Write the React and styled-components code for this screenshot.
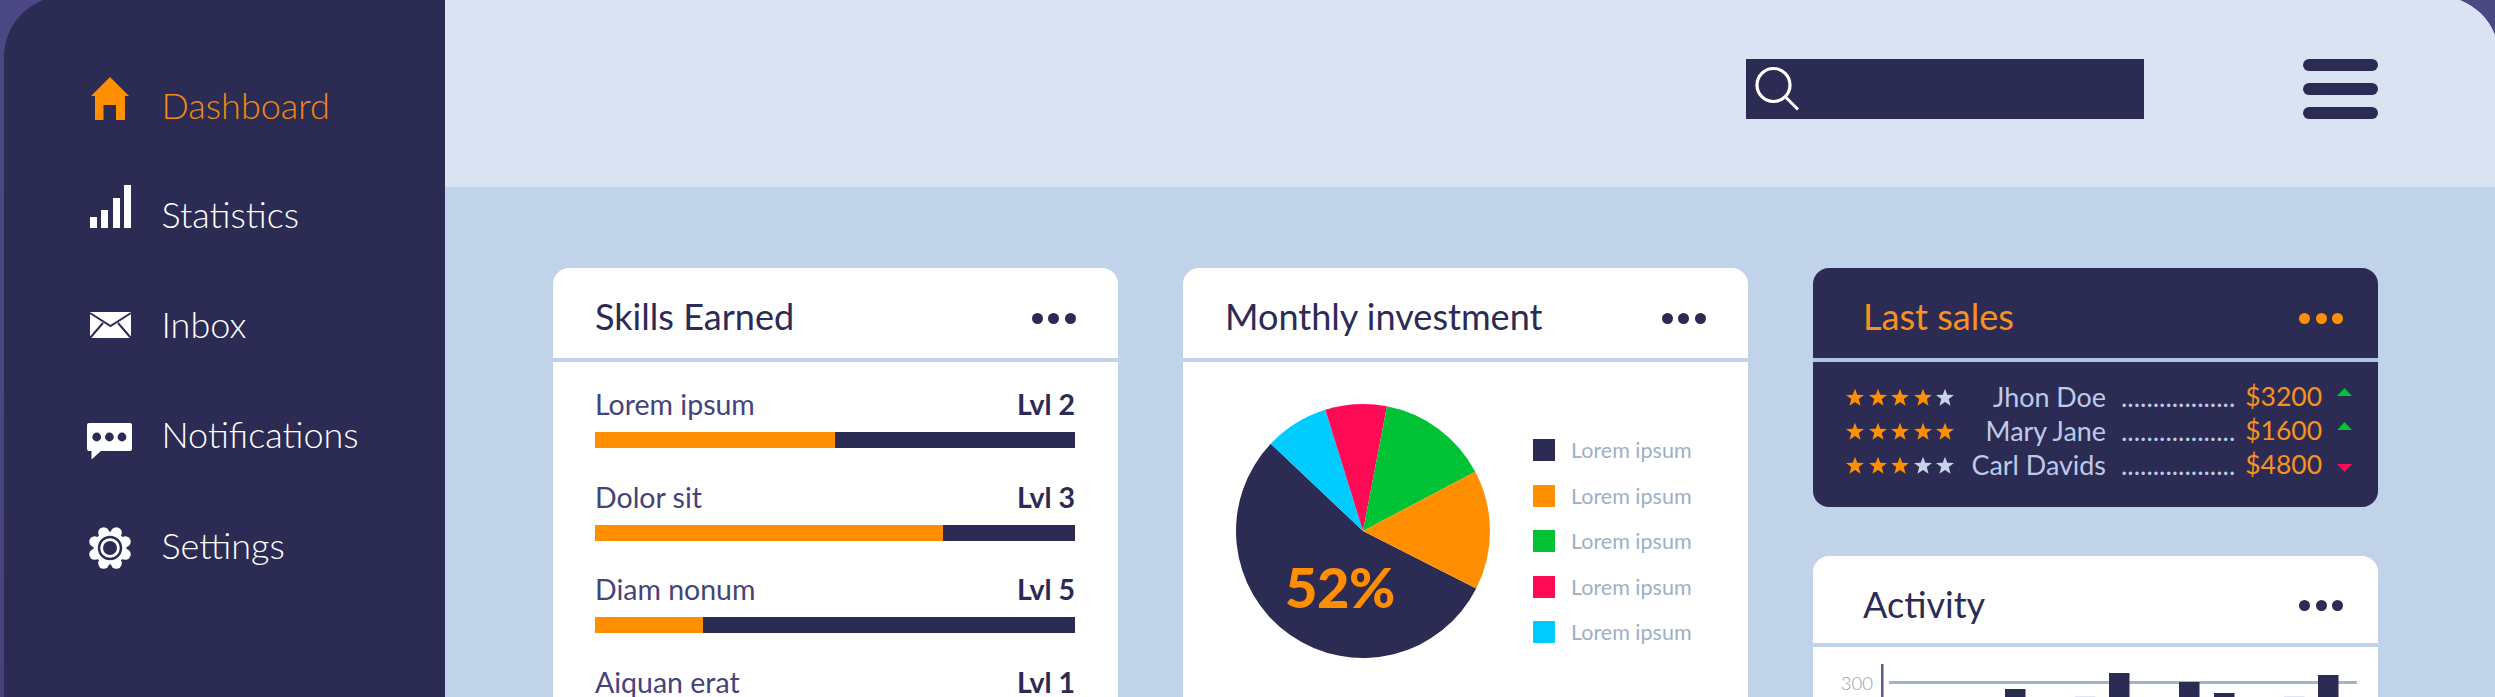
import React from "react";
import styled, { createGlobalStyle } from "styled-components";

const NAVY = "#2c2b54";
const ORANGE = "#ff8f00";
const PALE = "#c0d3e8";

const Global = createGlobalStyle`
  html, body { margin: 0; padding: 0; background: #4a4680; }
  body { font-family: "Lato", "Liberation Sans", sans-serif; }
  * { box-sizing: border-box; }
`;

const Stage = styled.div`
  width: 2495px;
  height: 697px;
  overflow: hidden;
  background: linear-gradient(#4c4884, #474379);
`;
const Frame = styled.div`
  display: flex;
  width: 2495px;
  height: 760px;
  margin: -4px 0 0 4px;
  border-radius: 61px 61px 0 0;
  overflow: hidden;
`;
const Sidebar = styled.nav`
  flex: 0 0 441px;
  background: ${NAVY};
  padding: 55.5px 0 0 81.5px;
  display: flex;
  flex-direction: column;
`;
const NavRow = styled.div`
  display: flex;
  align-items: center;
  gap: 28px;
  height: ${(p) => p.$h || 110}px;
  color: ${(p) => (p.$active ? "#f28a10" : "#fff")};
  font-size: 36px;
  font-weight: 300;
  line-height: 44px;
  font-variant-ligatures: common-ligatures discretionary-ligatures;
`;
const NavIcon = styled.svg`
  flex: 0 0 48px;
  width: 48px;
  height: 64px;
  fill: ${(p) => (p.$active ? ORANGE : "#fff")};
  overflow: visible;
`;
const Main = styled.main`
  flex: 1;
  display: flex;
  flex-direction: column;
  background: ${PALE};
`;
const TopBar = styled.header`
  flex: 0 0 191px;
  background: #d9e3f2;
  display: flex;
  justify-content: flex-end;
  align-items: flex-start;
  gap: 159px;
  padding: 63px 121px 0 0;
`;
const SearchBox = styled.div`
  width: 398px;
  height: 60px;
  background: ${NAVY};
  display: flex;
  align-items: center;
  padding-left: 8px;
`;
const SearchIcon = styled.svg`
  width: 50px;
  height: 60px;
  fill: none;
  stroke: #fff;
`;
const Burger = styled.div`
  width: 75px;
  height: 60px;
  display: flex;
  flex-direction: column;
  justify-content: space-between;
`;
const BurgerBar = styled.span`
  display: block;
  height: 12px;
  border-radius: 6px;
  background: ${NAVY};
`;
const Columns = styled.div`
  display: flex;
  align-items: flex-start;
  gap: 65px;
  padding: 81px 0 0 108px;
`;
const Column = styled.div`
  flex: 0 0 565px;
  display: flex;
  flex-direction: column;
  gap: 49px;
`;
const Card = styled.section`
  background: ${(p) => (p.$dark ? NAVY : "#fff")};
  border-radius: 16px;
  overflow: hidden;
`;
const CardHead = styled.div`
  height: ${(p) => p.$h || 94}px;
  border-bottom: 4px solid ${(p) => (p.$dark ? "#b4c4e4" : PALE)};
  display: flex;
  align-items: center;
  justify-content: space-between;
  padding: ${(p) => (p.$h ? p.$h - 80 : 9)}px ${(p) => (p.$wide ? "35px 0 50px" : "42.5px 0 42px")};
`;
const Title = styled.h2`
  margin: 0 0 3px;
  font-size: 36.1px;
  line-height: 44px;
  font-weight: 400;
  color: ${(p) => (p.$dark ? "#f7921e" : NAVY)};
`;
const Dots = styled.div`
  display: flex;
  gap: 5.5px;
  margin-top: 1px;
`;
const Dot = styled.i`
  display: block;
  width: 11px;
  height: 11px;
  border-radius: 50%;
  background: ${(p) => (p.$dark ? ORANGE : NAVY)};
`;
const SkillList = styled.div`
  padding: 25px 43px 0 42px;
  display: flex;
  flex-direction: column;
  gap: 31.5px;
  height: 400px;
`;
const Skill = styled.div`
  display: flex;
  flex-direction: column;
  gap: 11px;
`;
const SkillText = styled.div`
  display: flex;
  justify-content: space-between;
  font-size: 28.5px;
  line-height: 34px;
  color: #45437a;
`;
const Level = styled.b`
  font-weight: 700;
  font-size: 28.5px;
  color: ${NAVY};
`;
const Track = styled.div`
  height: 16px;
  background: ${NAVY};
`;
const Fill = styled.div`
  height: 100%;
  background: ${ORANGE};
`;
const PieBody = styled.div`
  padding: 41px 0 0 52px;
  height: 400px;
`;
const PieRow = styled.div`
  display: flex;
  align-items: flex-start;
  gap: 42px;
`;
const PieWrap = styled.div`
  position: relative;
  width: 256px;
  height: 256px;
`;
const PieSvg = styled.svg`
  display: block;
  width: 256px;
  height: 256px;
`;
const PieLabel = styled.span`
  position: absolute;
  left: 50px;
  top: 150px;
  font-size: 56px;
  line-height: 68px;
  font-weight: 900;
  letter-spacing: -0.5px;
  color: ${ORANGE};
`;
const Legend = styled.ul`
  list-style: none;
  margin: 0;
  padding: 36px 0 0;
  display: flex;
  flex-direction: column;
  gap: 23.5px;
`;
const LegendItem = styled.li`
  display: flex;
  align-items: center;
  gap: 16px;
  height: 22px;
  font-size: 21.5px;
  color: #9db0c4;
`;
const Swatch = styled.i`
  display: block;
  width: 22px;
  height: 22px;
  background: ${(p) => p.$c};
`;
const Caption = styled.p`
  margin: 33px 0 0;
  padding-right: 52px;
  text-align: center;
  font-size: 28px;
  line-height: 34px;
  color: ${NAVY};
`;
const Sales = styled.div`
  height: 145px;
  padding-top: 17px;
`;
const SaleRow = styled.div`
  display: flex;
  align-items: center;
  height: 34px;
  padding-left: 33px;
  font-size: 26.9px;
`;
const Stars = styled.div`
  flex: 0 0 108px;
  display: flex;
  gap: 4.5px;
  margin-top: 2px;
`;
const Star = styled.svg`
  display: block;
  width: 18px;
  height: 18px;
  fill: ${(p) => (p.$on ? ORANGE : "#c6d3ea")};
`;
const Name = styled.span`
  flex: 0 0 152px;
  text-align: right;
  color: #bccbe8;
  white-space: nowrap;
`;
const Leader = styled.span`
  flex: 0 0 112px;
  margin: 0 10px 0 15px;
  white-space: nowrap;
  color: #bccbe8;
`;
const Price = styled.span`
  flex: 0 0 77px;
  color: #f7921e;
  font-weight: 400;
  font-size: 26.5px;
`;
const Arrow = styled.svg`
  flex: 0 0 15px;
  width: 15px;
  height: 34px;
  margin-left: 15px;
  fill: ${(p) => (p.$up ? "#00c234" : "#ff0a54")};
`;
const ChartSvg = styled.svg`
  display: block;
  width: 565px;
  height: 110px;
  font-family: "Lato", "Liberation Sans", sans-serif;
`;

const nav = [
  { label: "Dashboard", active: true, h: 107, icon: <path d="M24 4 L43 23 H39 V47 H30 V32 H17.5 V47 H9 V23 H5 Z" /> },
  {
    label: "Statistics",
    h: 110,
    icon: (
      <>
        <rect x="4" y="35" width="7" height="11" />
        <rect x="15" y="28" width="7" height="18" />
        <rect x="27" y="16" width="7" height="30" />
        <rect x="38" y="3" width="7" height="43" />
      </>
    ),
  },
  {
    label: "Inbox",
    h: 110,
    icon: (
      <>
        <rect x="4" y="20" width="41" height="26" />
        <path d="M4 21 L24.5 34 L45 21 M4 46 L17 31 M45 46 L32 31" fill="none" stroke={NAVY} strokeWidth="2" />
      </>
    ),
  },
  {
    label: "Notifications",
    h: 111,
    icon: (
      <>
        <path d="M3 21 H44 a2 2 0 0 1 2 2 V47 a2 2 0 0 1 -2 2 H15 L5.5 57.5 V49 H3 a2 2 0 0 1 -2 -2 V23 a2 2 0 0 1 2 -2 Z" />
        <circle cx="10.7" cy="35" r="4.4" fill={NAVY} />
        <circle cx="23.4" cy="35" r="4.4" fill={NAVY} />
        <circle cx="36" cy="35" r="4.4" fill={NAVY} />
      </>
    ),
  },
  {
    label: "Settings",
    h: 110,
    icon: (
      <>
        <circle cx="24" cy="35" r="16.5" />
        {[0, 1, 2, 3, 4, 5, 6, 7].map((k) => {
          const a = ((22.5 + k * 45) * Math.PI) / 180;
          return <circle key={k} cx={24 + 16.5 * Math.cos(a)} cy={35 + 16.5 * Math.sin(a)} r="5.5" />;
        })}
        <circle cx="24" cy="35" r="11" fill="none" stroke={NAVY} strokeWidth="2.4" />
        <circle cx="24" cy="35" r="7" fill={NAVY} />
      </>
    ),
  },
];

const skills = [
  { name: "Lorem ipsum", lvl: "Lvl 2", pct: 50 },
  { name: "Dolor sit", lvl: "Lvl 3", pct: 72.6 },
  { name: "Diam nonum", lvl: "Lvl 5", pct: 22.5 },
  { name: "Aiquan erat", lvl: "Lvl 1", pct: 40 },
];

const R = 127;
const C = 128;
const pt = (dx, dy) => {
  const l = Math.hypot(dx, dy);
  return [C + (dx / l) * R, C + (dy / l) * R];
};
const bounds = [
  { c: NAVY, p: [112.8, 57.3], q: [-91, -86], large: 1 },
  { c: "#00cbff", p: [-91, -86], q: [-37.3, -120] },
  { c: "#ff0a54", p: [-37.3, -120], q: [23.6, -123] },
  { c: "#00c234", p: [23.6, -123], q: [111, -58.7] },
  { c: ORANGE, p: [111, -58.7], q: [112.8, 57.3] },
];
const legendColors = [NAVY, ORANGE, "#00c234", "#ff0a54", "#00cbff"];

const sales = [
  { on: 4, name: "Jhon Doe", price: "$3200", up: true },
  { on: 5, name: "Mary Jane", price: "$1600", up: true },
  { on: 3, name: "Carl Davids", price: "$4800", up: false },
];

const bars = [
  { x: 192, y: 42 },
  { x: 262, y: 49, pale: true },
  { x: 296, y: 26 },
  { x: 366, y: 35 },
  { x: 401, y: 46 },
  { x: 471, y: 49, pale: true },
  { x: 505, y: 28 },
];

const More = ({ dark }) => (
  <Dots>
    <Dot $dark={dark} />
    <Dot $dark={dark} />
    <Dot $dark={dark} />
  </Dots>
);

export default function App() {
  return (
    <>
      <Global />
      <Stage>
        <Frame>
          <Sidebar>
            {nav.map((n) => (
              <NavRow key={n.label} $active={n.active} $h={n.h}>
                <NavIcon viewBox="0 0 48 64" $active={n.active}>
                  {n.icon}
                </NavIcon>
                {n.label}
              </NavRow>
            ))}
          </Sidebar>
          <Main>
            <TopBar>
              <SearchBox>
                <SearchIcon viewBox="0 0 50 60">
                  <circle cx="19.5" cy="26" r="16.5" strokeWidth="3.2" />
                  <path d="M31.5 38 L44 50.5" strokeWidth="3" />
                </SearchIcon>
              </SearchBox>
              <Burger>
                <BurgerBar />
                <BurgerBar />
                <BurgerBar />
              </Burger>
            </TopBar>
            <Columns>
              <Column>
                <Card>
                  <CardHead>
                    <Title>Skills Earned</Title>
                    <More />
                  </CardHead>
                  <SkillList>
                    {skills.map((s) => (
                      <Skill key={s.name}>
                        <SkillText>
                          <span>{s.name}</span>
                          <Level>{s.lvl}</Level>
                        </SkillText>
                        <Track>
                          <Fill style={{ width: `${s.pct}%` }} />
                        </Track>
                      </Skill>
                    ))}
                  </SkillList>
                </Card>
              </Column>
              <Column>
                <Card>
                  <CardHead>
                    <Title>Monthly investment</Title>
                    <More />
                  </CardHead>
                  <PieBody>
                    <PieRow>
                      <PieWrap>
                        <PieSvg viewBox="0 0 256 256">
                          {bounds.map((b) => {
                            const [x1, y1] = pt(...b.p);
                            const [x2, y2] = pt(...b.q);
                            return (
                              <path
                                key={b.c}
                                fill={b.c}
                                d={`M${C} ${C} L${x1} ${y1} A${R} ${R} 0 ${b.large || 0} 1 ${x2} ${y2} Z`}
                              />
                            );
                          })}
                        </PieSvg>
                        <PieLabel>52%</PieLabel>
                      </PieWrap>
                      <Legend>
                        {legendColors.map((c) => (
                          <LegendItem key={c}>
                            <Swatch $c={c} />
                            Lorem ipsum
                          </LegendItem>
                        ))}
                      </Legend>
                    </PieRow>
                    <Caption>Lorem ipsum dolor sit</Caption>
                  </PieBody>
                </Card>
              </Column>
              <Column>
                <Card $dark>
                  <CardHead $dark $wide>
                    <Title $dark>Last sales</Title>
                    <More dark />
                  </CardHead>
                  <Sales>
                    {sales.map((s) => (
                      <SaleRow key={s.name}>
                        <Stars>
                          {[0, 1, 2, 3, 4].map((i) => (
                            <Star key={i} viewBox="0 0 24 24" $on={i < s.on}>
                              <path d="M12 1 L15 9 L24 9.3 L17 14.8 L19.4 23.5 L12 18.5 L4.6 23.5 L7 14.8 L0 9.3 L9 9 Z" />
                            </Star>
                          ))}
                        </Stars>
                        <Name>{s.name}</Name>
                        <Leader>..................</Leader>
                        <Price>{s.price}</Price>
                        <Arrow viewBox="0 0 15 34" $up={s.up}>
                          <path d={s.up ? "M7.5 9 L15 17 H0 Z" : "M0 17 H15 L7.5 25 Z"} />
                        </Arrow>
                      </SaleRow>
                    ))}
                  </Sales>
                </Card>
                <Card>
                  <CardHead $wide $h={91}>
                    <Title>Activity</Title>
                    <More />
                  </CardHead>
                  <ChartSvg viewBox="0 0 565 110">
                    <rect x="68" y="17" width="2.5" height="93" fill="#5e5a8c" />
                    <rect x="76" y="34" width="468" height="3" fill="#a3b5c8" />
                    <text x="60" y="43" textAnchor="end" fontSize="18.5" fontWeight="300" fill="#8ea2b8">
                      300
                    </text>
                    {bars.map((b) => (
                      <rect key={b.x} x={b.x} y={b.y} width="20.5" height={110 - b.y} fill={b.pale ? "#e1e5f6" : NAVY} />
                    ))}
                  </ChartSvg>
                </Card>
              </Column>
            </Columns>
          </Main>
        </Frame>
      </Stage>
    </>
  );
}
